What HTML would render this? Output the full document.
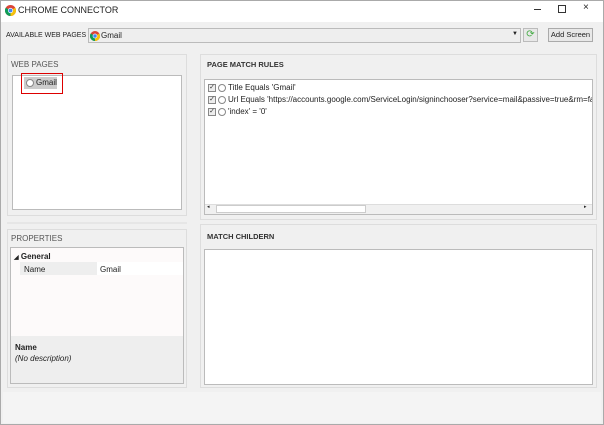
<!DOCTYPE html><html><head><style>
*{box-sizing:border-box;margin:0;padding:0}
body{width:604px;height:425px;overflow:hidden;font-family:"Liberation Sans",sans-serif;font-size:8px;color:#222;background:#fff;position:relative}
.a{position:absolute}
.win{left:0;top:0;width:604px;height:425px;border:1px solid #aaa;background:#f0f0f0}
.hdr{font-size:8px;color:#333}
.box{background:#fff;border:1px solid #bbb}
.cb{display:inline-block;width:8px;height:8px;border:1px solid #888;background:#eee;font-size:7px;line-height:6px;text-align:center;vertical-align:middle;color:#333}
.rd{display:inline-block;width:8px;height:8px;border:1px solid #888;border-radius:50%;background:#fff;vertical-align:middle;margin:0 2px}
</style></head><body>
<div class="a win"></div>
<div class="a" style="left:1px;top:1px;width:602px;height:21px;background:#fff"></div>
<svg class="a" style="left:5px;top:5px" width="11" height="11" viewBox="0 0 12 12"><circle cx="6" cy="6" r="6" fill="#db4437"/><path d="M6 6L11.2 3A6 6 0 0 1 6 12Z" fill="#f4c20d"/><path d="M6 6L6 12A6 6 0 0 1 .8 3Z" fill="#0f9d58"/><circle cx="6" cy="6" r="2.8" fill="#fff"/><circle cx="6" cy="6" r="2.1" fill="#4285f4"/></svg>
<div class="a" style="left:18px;top:5px;font-size:9px">CHROME CONNECTOR</div>
<div class="a" style="left:534px;top:9px;width:7px;height:1px;background:#333"></div>
<div class="a" style="left:558px;top:5px;width:8px;height:8px;border:1px solid #333"></div>
<div class="a" style="left:583px;top:2px;font-size:10px">×</div>
<div class="a" style="left:6px;top:32px;font-size:7px">AVAILABLE WEB PAGES</div>
<div class="a" style="left:88px;top:28px;width:433px;height:15px;border:1px solid #bbb;background:#eee"></div>
<svg class="a" style="left:90px;top:31px" width="10" height="10" viewBox="0 0 12 12"><circle cx="6" cy="6" r="6" fill="#db4437"/><path d="M6 6L11.2 3A6 6 0 0 1 6 12Z" fill="#f4c20d"/><path d="M6 6L6 12A6 6 0 0 1 .8 3Z" fill="#0f9d58"/><circle cx="6" cy="6" r="2.8" fill="#fff"/><circle cx="6" cy="6" r="2.1" fill="#4285f4"/></svg>
<div class="a" style="left:101px;top:31px">Gmail</div>
<div class="a" style="left:512px;top:31px;font-size:6px">▼</div>
<div class="a" style="left:523px;top:28px;width:15px;height:14px;border:1px solid #bbb;background:#e8e8e8;color:#4a4;font-size:10px;text-align:center;line-height:12px">⟳</div>
<div class="a" style="left:548px;top:28px;width:45px;height:14px;border:1px solid #aaa;background:#e8e8e8;font-size:7.5px;text-align:center;line-height:12px">Add Screen</div>
<div class="a" style="left:7px;top:54px;width:180px;height:162px;border:1px solid #ddd;background:#f0f0f0"></div>
<div class="a hdr" style="left:11px;top:60px;color:#555">WEB PAGES</div>
<div class="a box" style="left:12px;top:75px;width:170px;height:135px"></div>
<div class="a" style="left:24px;top:77px;width:33px;height:12px;background:#ccc"></div>
<div class="a" style="left:21px;top:73px;width:42px;height:21px;border:1px solid #d00"></div>
<div class="a" style="left:26px;top:78px"><span class="rd" style="margin:0 2px 0 0"></span>Gmail</div>
<div class="a" style="left:7px;top:222px;width:180px;height:2px;background:#e6e6e6"></div>
<div class="a" style="left:7px;top:229px;width:180px;height:159px;border:1px solid #ddd;background:#f0f0f0"></div>
<div class="a hdr" style="left:11px;top:234px;color:#555">PROPERTIES</div>
<div class="a box" style="left:10px;top:247px;width:174px;height:137px;background:#fdfafa"></div>
<div class="a" style="left:11px;top:336px;width:172px;height:47px;background:#eee"></div>
<div class="a" style="left:14px;top:252px;font-weight:bold"><span style="font-size:6px">◢</span> General</div>
<div class="a" style="left:20px;top:262px;width:77px;height:13px;background:#eee"></div>
<div class="a" style="left:97px;top:262px;width:86px;height:13px;background:#fff"></div>
<div class="a" style="left:24px;top:265px">Name</div>
<div class="a" style="left:100px;top:265px">Gmail</div>
<div class="a" style="left:15px;top:343px;font-weight:bold">Name</div>
<div class="a" style="left:15px;top:354px;font-style:italic">(No description)</div>
<div class="a" style="left:200px;top:54px;width:397px;height:166px;border:1px solid #ddd;background:#f0f0f0"></div>
<div class="a hdr" style="left:207px;top:60px;font-weight:bold;font-size:7.5px">PAGE MATCH RULES</div>
<div class="a box" style="left:204px;top:79px;width:389px;height:136px"></div>
<div class="a" style="left:208px;top:83px;white-space:nowrap"><span class="cb">✓</span><span class="rd"></span>Title Equals 'Gmail'</div>
<div class="a" style="left:208px;top:95px;white-space:nowrap;width:384px;overflow:hidden"><span class="cb">✓</span><span class="rd"></span>Url Equals 'https://accounts.google.com/ServiceLogin/signinchooser?service=mail&amp;passive=true&amp;rm=false&amp;continue</div>
<div class="a" style="left:208px;top:107px;white-space:nowrap"><span class="cb">✓</span><span class="rd"></span>'index' = '0'</div>
<div class="a" style="left:205px;top:204px;width:387px;height:10px;background:#f0f0f0;border-top:1px solid #ddd"></div>
<div class="a" style="left:216px;top:205px;width:150px;height:8px;background:#fff;border:1px solid #ccc"></div>
<div class="a" style="left:207px;top:204px;font-size:5px">◂</div>
<div class="a" style="left:584px;top:204px;font-size:5px">▸</div>
<div class="a" style="left:200px;top:224px;width:397px;height:164px;border:1px solid #ddd;background:#f0f0f0"></div>
<div class="a hdr" style="left:207px;top:232px;font-weight:bold;font-size:7.5px">MATCH CHILDERN</div>
<div class="a box" style="left:204px;top:249px;width:389px;height:136px"></div>
<div class="a" style="left:3px;top:392px;width:598px;height:31px;background:#f4f4f4"></div>
</body></html>
